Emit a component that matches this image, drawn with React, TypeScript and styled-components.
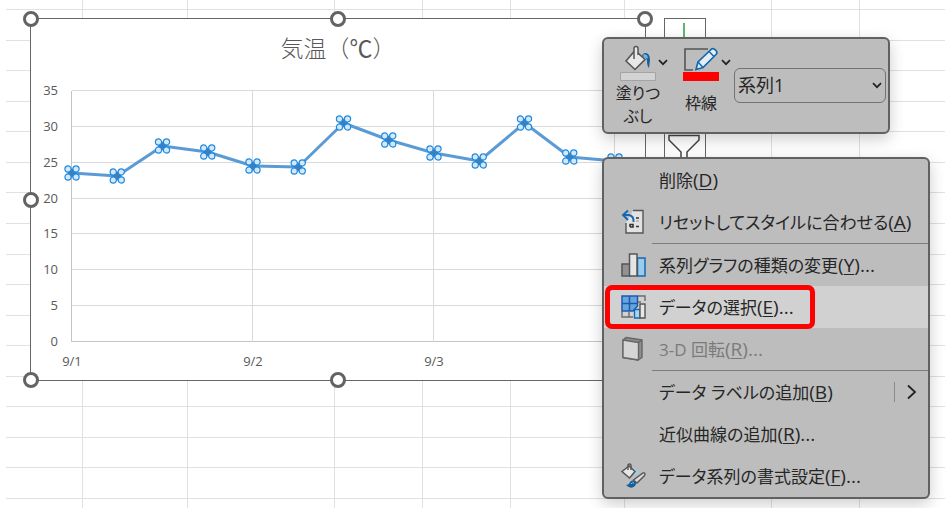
import React from "react";
import styled, { createGlobalStyle } from "styled-components";

const GlobalStyle = createGlobalStyle`
  * { box-sizing: border-box; }
  body {
    margin: 0;
    background: #fff;
    color: #262626;
    font-family: "Open Sans", "Noto Sans CJK JP", sans-serif;
  }
  button, select { font: inherit; color: inherit; }
`;

/* ---------- worksheet ---------- */

const Sheet = styled.main`
  position: relative;
  min-height: 508px;
  overflow: hidden;
`;

const Cells = styled.div`
  position: absolute;
  inset: 0 0 0 6px;
  overflow: hidden;
  display: grid;
  grid-template-columns: 77px 105px 147px 88px 88px 114px 147px 88px 1fr;
  grid-template-rows: 10px repeat(16, 1fr) 9px;
`;

const Cell = styled.div`
  border-right: 1px solid #e1e1e1;
  border-bottom: 1px solid #e1e1e1;
  &:nth-child(9n) { border-right: 0; }
  &:nth-last-child(-n + 9) { border-bottom: 0; }
`;

/* ---------- chart ---------- */

const ChartFrame = styled.section`
  position: absolute;
  top: 18px;
  left: 30px;
  width: calc(100% - 329px);
  background: #fff;
  border: 1px solid #666;
`;

const ChartTitle = styled.h1`
  margin: 0;
  height: 60px;
  line-height: 56px;
  text-align: center;
  font-family: "Noto Sans CJK JP", sans-serif;
  font-size: 23px;
  font-weight: 300;
  color: #595959;
`;

const Unit = styled.span`
  font-family: "Noto Sans CJK JP", sans-serif;
  font-weight: 400;
`;

const Plot = styled.svg`
  display: block;
  width: 100%;
  height: auto;
  font-family: "Open Sans", sans-serif;
  font-size: 13px;
  fill: #595959;
`;

const Handle = styled.span<{ $x: string; $y: string }>`
  position: absolute;
  left: ${(p) => p.$x};
  top: ${(p) => p.$y};
  width: 16px;
  height: 16px;
  margin: -8px;
  border: 3px solid #636363;
  border-radius: 50%;
  background: #fff;
`;

const SideButtons = styled.div`
  position: absolute;
  top: 18px;
  right: 239px;
  width: 42px;
  display: flex;
  flex-direction: column;
  border: 1px solid #666;
  background: #fff;
`;

const SideButton = styled.button`
  height: 50px;
  padding: 0;
  border: 0;
  background: none;
  display: flex;
  justify-content: center;
  align-items: center;
`;

/* ---------- floating surfaces ---------- */

const Surface = styled.div`
  position: absolute;
  background: #bdbdbd;
  border: 2px solid #616161;
  border-radius: 6px;
  box-shadow: 0 5px 16px rgba(0, 0, 0, 0.2);
`;

const MiniToolbar = styled(Surface)`
  top: 37px;
  right: 55px;
  width: 288px;
  height: 97px;
  display: flex;
  padding: 5px 2px 0 15px;
`;

const Tool = styled.button<{ $width: number; $gap: number }>`
  flex: none;
  width: ${(p) => p.$width}px;
  padding: 0;
  border: 0;
  background: none;
  display: flex;
  flex-direction: column;
  text-align: center;
  font-size: 16px;
  line-height: 23px;
  gap: ${(p) => p.$gap}px;
`;

const ToolFace = styled.span`
  display: flex;
  align-items: center;
  gap: 1px;
`;

const ToolLabel = styled.span`
  display: flex;
  flex-direction: column;
  align-items: center;
  width: 38px;
  white-space: nowrap;
  font-family: "Noto Sans CJK JP", sans-serif;
  font-feature-settings: "palt";
`;

const Picker = styled.label`
  position: relative;
  flex: 1;
  margin-top: 24px;
  height: 35px;
  svg {
    position: absolute;
    right: 4px;
    top: 14px;
    pointer-events: none;
  }
`;

const SeriesSelect = styled.select`
  appearance: none;
  width: 100%;
  height: 100%;
  padding: 0 3px 2px;
  border: 1px solid #737373;
  border-radius: 6px;
  background: transparent;
  font-size: 18px;
`;

const Menu = styled(Surface)`
  top: 157px;
  right: 15px;
  width: 328px;
`;

const MenuItem = styled.button<{ $active?: boolean }>`
  position: relative;
  display: flex;
  align-items: center;
  width: 100%;
  height: 42px;
  padding: 0 11px 0 15px;
  border: 0;
  background: ${(p) => (p.$active ? "#d1d1d1" : "transparent")};
  text-align: left;
  font-size: 17px;
  &:disabled { color: #7b7b7b; }
`;

const IconSlot = styled.span`
  width: 40px;
  height: 26px;
  flex: none;
`;

const ItemText = styled.span`
  flex: 1;
  line-height: 26px;
  white-space: nowrap;
  font-feature-settings: "palt";
`;

const AccessKey = styled.span`
  font-size: 19px;
  font-feature-settings: normal;
  u { text-underline-offset: 2px; text-decoration-thickness: 1px; }
`;

const Separator = styled.hr`
  margin: 0 0 0 48px;
  border: 0;
  height: 1px;
  background: #7d7d7d;
`;

const Submenu = styled.span`
  display: flex;
  align-items: center;
  height: 20px;
  padding-left: 11px;
  border-left: 1px solid #8a8a8a;
`;

const Highlight = styled.span`
  position: absolute;
  top: -1px;
  left: 1px;
  width: 210px;
  height: 44px;
  border: 5px solid #f00;
  border-radius: 7px;
`;

/* ---------- icons ---------- */

const Chevron = () => (
  <svg width="10" height="7" viewBox="0 0 10 7" fill="none" stroke="#222" strokeWidth="1.7">
    <path d="M1 1.2 5 5.2 9 1.2" />
  </svg>
);

const FillIcon = () => (
  <svg width="38" height="37" viewBox="0 0 38 37" fill="none">
    <path d="M7 17 16 6.500 26 15.500 16 25.500Z" fill="#e8e8e8" stroke="#555" strokeWidth="1.600" />
    <path d="M15 15V4.500Q15 2.500 17 2.500T19 4.500V11" fill="#e8e8e8" stroke="#555" strokeWidth="1.500" />
    <path d="M23 12Q24 8.500 27 9 31 10 31 16L30 24Q28 22 28 17 28 13 23 12Z" fill="#12609f" />
    <path d="M24 11Q25 9.200 28 11.200L29 14Q26 15 24 11Z" fill="#77b5e0" />
    <path d="M1.500 28.500H36.500V36.500H1.500Z" fill="#d3d3d3" stroke="#a3a3a3" />
  </svg>
);

const OutlineIcon = () => (
  <svg width="38" height="37" viewBox="0 0 38 37" fill="none">
    <path d="M26 5H3V26H11" stroke="#555" strokeWidth="1.600" />
    <path d="M14 25.500 16 18 29 5.500Q31 3.700 33.500 6 36 8.500 34 10.500L21 23.500Z" fill="#e5edf5" stroke="#1668ae" strokeWidth="1.700" />
    <path d="M16 18 21 23.500M27 7.500 32 12.500" stroke="#1668ae" strokeWidth="1.500" />
    <path d="M1 28H37V37H1Z" fill="#f00" />
  </svg>
);

const ResetIcon = () => (
  <svg width="28" height="26" viewBox="0 0 28 26" fill="none">
    <path d="M14 1.500H24V24H7V14" fill="#e2e2e2" stroke="#555" strokeWidth="1.400" />
    <path d="M9 1.500 4 6 9 11M4.500 6H10Q15 7 14.500 13" stroke="#1668ae" strokeWidth="1.900" />
    <path d="M11 18V15.500H14V18H11M17 9H20M17 17.500H20" stroke="#333" strokeWidth="1.600" />
    <path d="M17 12H20" stroke="#999" />
  </svg>
);

const ColumnIcon = () => (
  <svg width="28" height="26" viewBox="0 0 28 26" strokeWidth="1.500">
    <path d="M3 12H11V24H3Z" fill="#929292" stroke="#555" />
    <path d="M18.500 6H26V24H18.500Z" fill="#9bcbec" stroke="#1668ae" />
    <path d="M10.500 2H18V24H10.500Z" fill="#e5e5e5" stroke="#555" />
  </svg>
);

const SelectDataIcon = () => (
  <svg width="28" height="26" viewBox="0 0 28 26" fill="none">
    <path d="M3 2H18.500V12L14 17H3Z" fill="#62a8dc" stroke="#2456b0" strokeWidth="1.500" />
    <path d="M10.500 2V17M3 9.500H18.500" stroke="#2456b0" strokeWidth="1.500" />
    <path d="M19 2H26V7M19 8H22M3 17V23H14M10 18V23" stroke="#6b6b6b" strokeWidth="1.400" />
    <path d="M15.500 15.500H21V24H15.500Z" fill="#a9d4f0" stroke="#1668ae" strokeWidth="1.400" />
    <path d="M21 10H26V24H21Z" fill="#e7e7e7" stroke="#555" strokeWidth="1.400" />
  </svg>
);

const CubeIcon = () => (
  <svg width="28" height="26" viewBox="0 0 28 26" stroke="#666" strokeWidth="1.400" strokeLinejoin="round">
    <path d="M4 4 7 1.500 23 4V21.500L19 24 4 21.500Z" fill="#8e8e8e" />
    <path d="M4 4 19.500 6.500V24L4 21.500Z" fill="#d5d5d5" />
    <path d="M19.500 6.500 23 4" />
  </svg>
);

const FormatIcon = () => (
  <svg width="28" height="26" viewBox="0 0 28 26" fill="none">
    <path d="M14 4Q20 6 19 11L15 12Z" fill="#9bcbec" />
    <path d="M3 8.500 10 3 16 8.500 10.500 15Z" fill="#e6e6e6" stroke="#555" strokeWidth="1.500" />
    <path d="M9 7V2Q9 1 10.500 1T12 2V7" stroke="#555" strokeWidth="1.400" />
    <path d="M14.500 17 24 10Q27 9.500 25.500 12.500L18 20Z" fill="#ddd" stroke="#555" strokeWidth="1.400" />
    <path d="M7 22Q10 22 11 19 13 16 16.500 19 18 22 14.500 24 11 26 7 22Z" fill="#12609f" />
    <path d="M12 21Q13 19 15 20" stroke="#8dc2e8" />
  </svg>
);

/* ---------- data ---------- */

const values = [23.5, 23.2, 27.4, 26.5, 24.6, 24.4, 30.5, 28.2, 26.4, 25.2, 30.5, 25.8, 25.3];
const ticks = [0, 5, 10, 15, 20, 25, 30, 35];
const days = ["9/1", "9/2", "9/3"];

const PLOT_LEFT = 41;
const PLOT_BOTTOM = 263;
const DAY_WIDTH = 181;
const xOf = (i: number) => PLOT_LEFT + (i * DAY_WIDTH) / 4;
const yOf = (v: number) => PLOT_BOTTOM - Math.round((v * 251) / 35);

const corners = [[-4, -4], [4, -4], [-4, 4], [4, 4]];

const handles = [
  ["0%", "0%"], ["50%", "0%"], ["100%", "0%"],
  ["0%", "50%"], ["0%", "100%"], ["50%", "100%"],
];

type Entry = {
  label: string;
  keyName: string;
  more?: boolean;
  icon?: React.ReactNode;
  active?: boolean;
  disabled?: boolean;
  submenu?: boolean;
  divider?: boolean;
};

const entries: Entry[] = [
  { label: "削除", keyName: "D" },
  { label: "リセットしてスタイルに合わせる", keyName: "A", icon: <ResetIcon />, divider: true },
  { label: "系列グラフの種類の変更", keyName: "Y", more: true, icon: <ColumnIcon /> },
  { label: "データの選択", keyName: "E", more: true, icon: <SelectDataIcon />, active: true },
  { label: "3-D 回転", keyName: "R", more: true, icon: <CubeIcon />, disabled: true, divider: true },
  { label: "データ ラベルの追加", keyName: "B", submenu: true },
  { label: "近似曲線の追加", keyName: "R", more: true },
  { label: "データ系列の書式設定", keyName: "F", more: true, icon: <FormatIcon /> },
];

const TemperatureChart = () => (
  <ChartFrame aria-label="気温グラフ">
    <ChartTitle>気温（<Unit>℃</Unit>）</ChartTitle>
    <Plot viewBox="0 0 614 301">
      {ticks.map((t) => (
        <g key={t}>
          <path d={`M${PLOT_LEFT} ${yOf(t) - 0.5}H614`} stroke={t ? "#d9d9d9" : "#c4c4c4"} />
          <text x="27" y={yOf(t) + 4} textAnchor="end">{t}</text>
        </g>
      ))}
      {[0, 1, 2, 3].map((d) => (
        <path key={d} d={`M${xOf(d * 4) - 0.5} 12V263`} stroke={d ? "#d9d9d9" : "#c4c4c4"} />
      ))}
      {days.map((d, i) => (
        <text key={d} x={xOf(i * 4)} y="287" textAnchor="middle">{d}</text>
      ))}
      <polyline
        points={values.map((v, i) => `${xOf(i)},${yOf(v)}`).join(" ")}
        fill="none"
        stroke="#5b9bd5"
        strokeWidth="3"
        strokeLinejoin="round"
      />
      {values.map((v, i) => (
        <g key={i} transform={`translate(${xOf(i)} ${yOf(v)})`}>
          <path d="M-5-5 0-3 5-5 3 0 5 5 0 3-5 5-3 0Z" fill="#3a7fbf" stroke="#3a7fbf" strokeWidth="2" />
          {corners.map(([cx, cy]) => (
            <circle key={`${cx}${cy}`} cx={cx} cy={cy} r="3.1" fill="#d5e8f8" stroke="#1f8ae0" strokeWidth="1.2" />
          ))}
        </g>
      ))}
    </Plot>
    {handles.map(([x, y]) => (
      <Handle key={x + y} $x={x} $y={y} />
    ))}
  </ChartFrame>
);

export default function App() {
  return (
    <>
      <GlobalStyle />
      <Sheet>
        <Cells aria-hidden="true">
          {Array.from({ length: 18 * 9 }, (_, i) => <Cell key={i} />)}
        </Cells>

        <TemperatureChart />

        <SideButtons>
          <SideButton aria-label="グラフ要素">
            <svg width="38" height="42" viewBox="0 0 38 42" fill="none" stroke="#2f9e44" strokeWidth="1.500">
              <path d="M18 0V36M2 18H34" />
            </svg>
          </SideButton>
          <SideButton aria-label="グラフ スタイル" />
          <SideButton aria-label="グラフ フィルター">
            <svg width="34" height="34" viewBox="0 0 34 34" fill="none" stroke="#444" strokeWidth="1.500">
              <path d="M13 34V25L1 13V8.500H31V13L19 25V34" />
            </svg>
          </SideButton>
        </SideButtons>

        <MiniToolbar role="toolbar">
          <Tool $width={63} $gap={0}>
            <ToolFace><FillIcon /><Chevron /></ToolFace>
            <ToolLabel><span>塗りつ</span><span>ぶし</span></ToolLabel>
          </Tool>
          <Tool $width={52} $gap={10}>
            <ToolFace><OutlineIcon /><Chevron /></ToolFace>
            <ToolLabel>枠線</ToolLabel>
          </Tool>
          <Picker>
            <SeriesSelect aria-label="グラフ要素の選択">
              <option>系列1</option>
            </SeriesSelect>
            <Chevron />
          </Picker>
        </MiniToolbar>

        <Menu role="menu">
          {entries.map((e) => (
            <React.Fragment key={e.label}>
              <MenuItem role="menuitem" $active={e.active} disabled={e.disabled}>
                <IconSlot>{e.icon}</IconSlot>
                <ItemText>
                  {e.label}
                  <AccessKey>(<u>{e.keyName}</u>){e.more && "..."}</AccessKey>
                </ItemText>
                {e.submenu && (
                  <Submenu>
                    <svg width="11" height="16" viewBox="0 0 11 16" fill="none" stroke="#222" strokeWidth="1.800">
                      <path d="M2 1.500 9 8 2 14.500" />
                    </svg>
                  </Submenu>
                )}
                {e.active && <Highlight />}
              </MenuItem>
              {e.divider && <Separator />}
            </React.Fragment>
          ))}
        </Menu>
      </Sheet>
    </>
  );
}
